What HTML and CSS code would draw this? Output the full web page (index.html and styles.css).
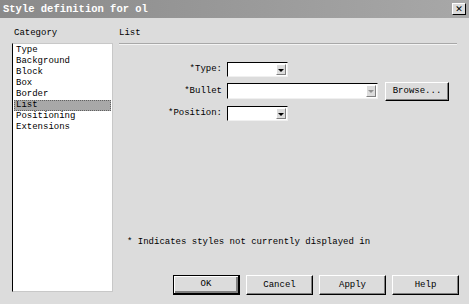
FILE: index.html
```html
<!DOCTYPE html>
<html lang="en">
<head>
    <meta charset="UTF-8">
    <title>Style definition for ol</title>
    <link rel="stylesheet" href="styles.css">
</head>
<body>
    <div class="dialog">
        <div class="titlebar">
            <span class="title">Style definition for ol</span>
            <span class="close">&#x2715;</span>
        </div>

        <div class="body">
            <div class="left">
                <div class="label">Category</div>
                <ul class="listbox">
                    <li>Type</li>
                    <li>Background</li>
                    <li>Block</li>
                    <li>Box</li>
                    <li>Border</li>
                    <li class="selected">List</li>
                    <li>Positioning</li>
                    <li>Extensions</li>
                </ul>
            </div>

            <div class="right">
                <div class="label">List</div>
                <div class="rule"></div>

                <div class="form">
                    <label>*Type:</label>
                    <div class="row">
                        <div class="select short"><span class="arrow"></span></div>
                    </div>

                    <label>*Bullet</label>
                    <div class="row">
                        <div class="select long"><span class="arrow disabled"></span></div>
                        <button class="btn browse">Browse...</button>
                    </div>

                    <label>*Position:</label>
                    <div class="row">
                        <div class="select short"><span class="arrow"></span></div>
                    </div>
                </div>

                <p class="note">* Indicates styles not currently displayed in</p>

                <div class="actions">
                    <button class="btn default">OK</button>
                    <button class="btn">Cancel</button>
                    <button class="btn">Apply</button>
                    <button class="btn">Help</button>
                </div>
            </div>
        </div>
    </div>
</body>
</html>
```

FILE: styles.css
```css
:root {
    --face: #dcdcdc;
    --shadow: #808080;
    --light: #ffffff;
    --dark: #000000;
}

* {
    box-sizing: border-box;
}

body {
    margin: 0;
    background: var(--face);
    font-family: "Liberation Mono", "DejaVu Sans Mono", monospace;
    font-size: 9px;
    line-height: 11px;
    color: #000;
}

.dialog {
    width: 469px;
    height: 304px;
    background: var(--face);
    display: flex;
    flex-direction: column;
}

.titlebar {
    height: 18px;
    display: flex;
    align-items: center;
    justify-content: space-between;
    padding: 0 3px 0 3px;
    background: linear-gradient(to right, #8a8a8a, #a8a8a8);
}

.title {
    color: #fff;
    font-weight: bold;
    font-size: 10.5px;
}

.close {
    width: 14px;
    height: 12px;
    background: var(--face);
    border: 1px solid;
    border-color: var(--light) var(--dark) var(--dark) var(--light);
    font-size: 9px;
    font-weight: bold;
    line-height: 10px;
    text-align: center;
    font-family: "DejaVu Sans", sans-serif;
}

.body {
    flex: 1;
    display: flex;
    padding: 10px 0 0 12px;
}

.label {
    height: 11px;
    padding-left: 2px;
}

.left {
    width: 101px;
    display: flex;
    flex-direction: column;
}

.listbox {
    list-style: none;
    margin: 4px 0 0 0;
    padding: 1px 1px 0 1px;
    height: 249px;
    background: #fff;
    border-top: 1px solid #c8c8c8;
    border-left: 1px solid #000;
    border-right: 1px solid #c8c8c8;
    border-bottom: 1px solid #c8c8c8;
}

.listbox li {
    height: 11px;
    padding-left: 2px;
}

.listbox .selected {
    background: #a8a8a8;
    outline: 1px dotted #606060;
    outline-offset: -1px;
}

.right {
    width: 341px;
    margin-left: 6px;
    display: flex;
    flex-direction: column;
}

.right > .label {
    padding-left: 0;
}

.rule {
    margin-top: 4px;
    width: 338px;
    height: 2px;
    border-top: 1px solid #a8a8a8;
    border-bottom: 1px solid #f4f4f4;
}

.form {
    margin-top: 16px;
    display: grid;
    grid-template-columns: 103px auto;
    column-gap: 5px;
    row-gap: 6px;
    align-items: center;
}

.form label {
    text-align: right;
}

.row {
    display: flex;
    align-items: center;
    gap: 7px;
    height: 16px;
}

.select {
    height: 15px;
    background: #fff;
    border: 1px solid;
    border-color: var(--dark) #f0f0f0 #f0f0f0 var(--dark);
    display: flex;
    justify-content: flex-end;
    padding: 1px;
}

.select.short {
    width: 61px;
}

.select.long {
    width: 151px;
    height: 16px;
}

.arrow {
    width: 10px;
    height: 100%;
    background: var(--face);
    border: 1px solid;
    border-color: var(--light) var(--shadow) var(--shadow) var(--light);
    position: relative;
}

.arrow::after {
    content: "";
    position: absolute;
    left: 1px;
    top: 4px;
    border-left: 3px solid transparent;
    border-right: 3px solid transparent;
    border-top: 3px solid #000;
}

.arrow.disabled::after {
    border-top-color: #909090;
}

.btn {
    font: inherit;
    color: #000;
    background: var(--face);
    border: 1px solid;
    border-color: var(--light) var(--dark) var(--dark) var(--light);
    box-shadow: inset -1px -1px 0 var(--shadow);
    padding: 0;
    height: 19px;
}

.browse {
    width: 64px;
}

.note {
    margin: 116px 0 0 8px;
}

.actions {
    margin-top: 27px;
    display: flex;
    justify-content: flex-end;
    gap: 6px;
    padding-right: 1px;
}

.actions .btn {
    width: 67px;
    height: 20px;
}

.actions .default {
    border: 1px solid #000;
    box-shadow: inset 1px 1px 0 var(--light), inset -2px -2px 0 var(--shadow);
    border-right-width: 2px;
    border-bottom-width: 2px;
}
```
